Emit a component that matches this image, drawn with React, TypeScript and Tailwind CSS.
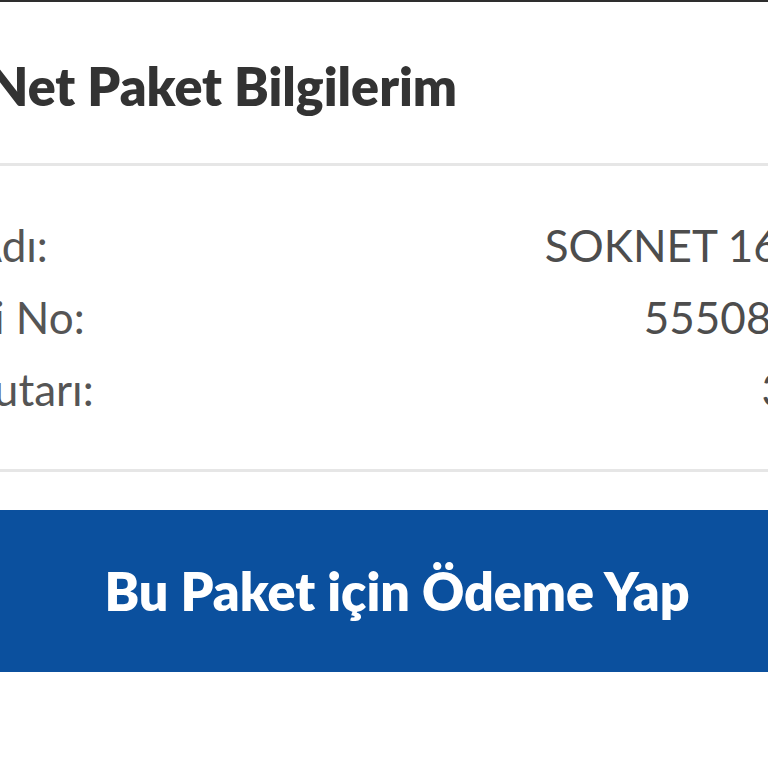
export default function App() {
  const rows = [
    { label: "Paket Adı:", value: "SOKNET 16 Mbps" },
    { label: "Müşteri No:", value: "5550812345" },
    { label: "Paket Tutarı:", value: "349,90" },
  ]

  return (
    <div className="h-[768px] w-[768px] overflow-hidden bg-white font-['Lato',sans-serif]">
      {/* photo edge above the card */}
      <div className="h-[2px] bg-[#2e2e2e]" />

      <div className="ml-[-145px] w-[1044px]">
        {/* Title */}
        <div className="h-[161px] pl-[45px] pt-[54px]">
          <h2 className="text-[52px] font-extrabold leading-[60px] text-[#333333]">
            SokNet Paket Bilgilerim
          </h2>
        </div>

        <div className="h-[3px] bg-[#e6e6e6]" />

        {/* Details */}
        <div className="pb-[44px] pt-[43px]">
          {rows.map((row) => (
            <div
              key={row.label}
              className="flex h-[72px] items-center justify-between text-[44px] leading-[72px]"
            >
              <span className="text-[#555555]">{row.label}</span>
              <span className="text-[#4d4d4d]">{row.value}</span>
            </div>
          ))}
        </div>

        <div className="h-[3px] bg-[#e6e6e6]" />

        {/* Pay button */}
        <div className="ml-[40px] mt-[38px]">
          <button className="flex h-[162px] w-full items-center justify-center bg-[#0b509e] text-[52px] font-extrabold text-white">
            Bu Paket için Ödeme Yap
          </button>
        </div>
      </div>
    </div>
  )
}
